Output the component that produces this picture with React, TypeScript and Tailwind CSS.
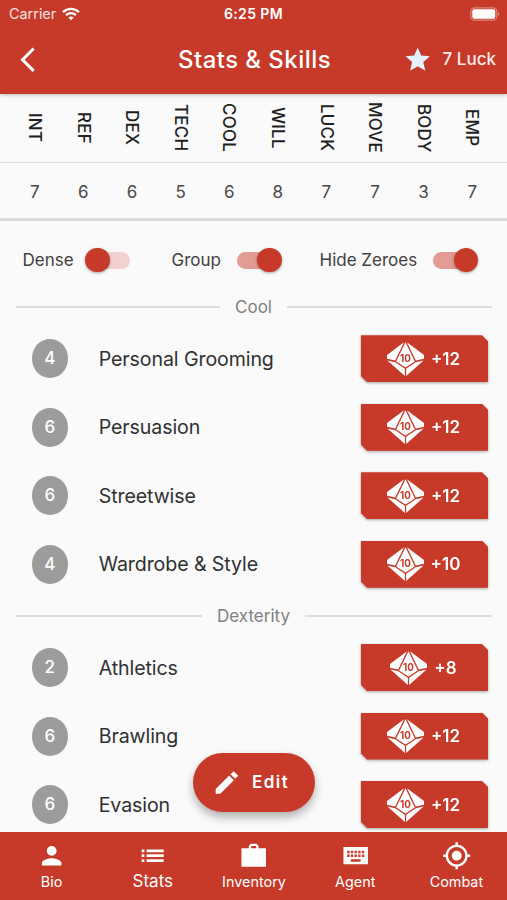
import { useState } from "react";
import type { ReactNode } from "react";

const STATS = [
  { name: "INT", value: 7 },
  { name: "REF", value: 6 },
  { name: "DEX", value: 6 },
  { name: "TECH", value: 5 },
  { name: "COOL", value: 6 },
  { name: "WILL", value: 8 },
  { name: "LUCK", value: 7 },
  { name: "MOVE", value: 7 },
  { name: "BODY", value: 3 },
  { name: "EMP", value: 7 },
];

const GROUPS = [
  {
    name: "Cool",
    skills: [
      { name: "Personal Grooming", level: 4, bonus: 12 },
      { name: "Persuasion", level: 6, bonus: 12 },
      { name: "Streetwise", level: 6, bonus: 12 },
      { name: "Wardrobe & Style", level: 4, bonus: 10 },
    ],
  },
  {
    name: "Dexterity",
    skills: [
      { name: "Athletics", level: 2, bonus: 8 },
      { name: "Brawling", level: 6, bonus: 12 },
      { name: "Evasion", level: 6, bonus: 12 },
    ],
  },
];

const TABS = [
  { label: "Bio", path: "M12 12c2.21 0 4-1.79 4-4s-1.79-4-4-4-4 1.79-4 4 1.79 4 4 4zm0 2c-2.67 0-8 1.34-8 4v2h16v-2c0-2.66-5.33-4-8-4z" },
  { label: "Stats", path: "M3 13.1h2.2v-2.2H3v2.2zm0 4h2.2v-2.2H3v2.2zm0-8h2.2V6.9H3v2.2zm4 4h14v-2.2H7v2.2zm0 4h14v-2.2H7v2.2zM7 6.9v2.2h14V6.9H7z" },
  { label: "Inventory", path: "M22 6h-6V4l-1.7-1.7H9.7L8 4v2H2v15h20V6zm-8 0h-4V4h4v2z" },
  { label: "Agent", path: "M22 5H2v14h20V5zm-11 3h2v2h-2V8zm0 3h2v2h-2v-2zM8 8h2v2H8V8zm0 3h2v2H8v-2zm-1 2H5v-2h2v2zm0-3H5V8h2v2zm9 7H8v-2h8v2zm0-4h-2v-2h2v2zm0-3h-2V8h2v2zm3 3h-2v-2h2v2zm0-3h-2V8h2v2z" },
  { label: "Combat", path: "M12 8c-2.21 0-4 1.79-4 4s1.79 4 4 4 4-1.79 4-4-1.79-4-4-4zm8.94 3c-.46-4.17-3.77-7.48-7.94-7.94V1h-2v2.06C6.83 3.52 3.52 6.83 3.06 11H1v2h2.06c.46 4.17 3.77 7.48 7.94 7.94V23h2v-2.06c4.17-.46 7.48-3.77 7.94-7.94H23v-2h-2.06zM12 19c-3.87 0-7-3.13-7-7s3.13-7 7-7 7 3.13 7 7-3.13 7-7 7z" },
];

function Icon({ path, className = "size-[29.4px]" }: { path: string; className?: string }) {
  return (
    <svg viewBox="0 0 24 24" fill="currentColor" className={className} aria-hidden="true">
      <path d={path} />
    </svg>
  );
}

function StatusBar() {
  return (
    <div className="grid h-[24.5px] grid-cols-3 items-center px-[9px] pt-[3.5px] leading-none">
      <div className="flex items-center gap-[6px] text-[14.4px] text-white/85">
        Carrier
        <svg viewBox="0 0 18 14" className="h-[14px] w-[18px] text-white" fill="none" stroke="currentColor" strokeWidth="2.3">
          <path d="M1 5.1C5.6.8 12.4.8 17 5.1" />
          <path d="M4 8.2c2.9-2.6 7.1-2.6 10 0" />
          <path d="M6.4 10.5c1.6-1.3 3.6-1.3 5.2 0L9 13.2z" fill="currentColor" stroke="none" />
        </svg>
      </div>
      <div className="text-center text-[14px] font-semibold tracking-[0.4px]">6:25 PM</div>
      <svg viewBox="0 0 30 14" className="h-[14px] w-[30px] translate-x-[2px] justify-self-end" fill="none">
        <rect x="0.8" y="0.8" width="26" height="12.4" rx="3.6" stroke="white" strokeOpacity="0.4" strokeWidth="1.2" />
        <rect x="2.3" y="2.3" width="23" height="9.4" rx="2" fill="white" />
        <path d="M28.2 5c1.4.8 1.4 3.2 0 4z" fill="white" fillOpacity="0.5" />
      </svg>
    </div>
  );
}

function TopBar() {
  return (
    <header className="z-10 h-[93.5px] shrink-0 bg-[#c73a29] text-white shadow-[0_1px_4px_rgba(0,0,0,0.25)]">
      <StatusBar />
      <div className="grid h-[69px] grid-cols-[1fr_auto_1fr] items-center pt-[2px] pr-[11px] pl-[13px]">
        <button type="button" aria-label="Back">
          <Icon path="M17.77 3.77 16 2 6 12l10 10 1.77-1.77L9.54 12z" />
        </button>
        <h1 className="text-[24px] font-medium tracking-[0.45px]">Stats &amp; Skills</h1>
        <div className="flex items-center justify-end gap-[10px] text-[17px] font-medium text-white/90">
          <Icon
            path="M12 17.27 18.18 21l-1.64-7.03L22 9.24l-7.19-.61L12 2 9.19 8.63 2 9.24l5.46 4.73L5.82 21z"
            className="size-[29.4px] text-[#e3f2fd]"
          />
          7 Luck
        </div>
      </div>
    </header>
  );
}

function StatTable() {
  return (
    <section className="shrink-0 border-b-[3px] border-[#dcdcdc] text-[#1f1f1f]">
      <div className="grid h-[69.5px] grid-cols-10 border-b border-[#dcdcdc] pr-[11px] pl-[10px]">
        {STATS.map((stat) => (
          <div key={stat.name} className="flex items-center justify-center text-[17px] font-medium tracking-[0.2px]">
            <span className="[writing-mode:vertical-rl]">{stat.name}</span>
          </div>
        ))}
      </div>
      <div className="grid h-[55px] grid-cols-10 items-center px-[10.5px] pt-[4px] text-center text-[17px] text-[#484848]">
        {STATS.map((stat) => (
          <span key={stat.name}>{stat.value}</span>
        ))}
      </div>
    </section>
  );
}

function Toggle({ label, initial, className }: { label: string; initial: boolean; className: string }) {
  const [on, setOn] = useState(initial);

  return (
    <label className={`flex items-center ${className}`}>
      <span className="pt-[2px]">{label}</span>
      <button
        type="button"
        role="switch"
        aria-checked={on}
        aria-label={label}
        onClick={() => setOn(!on)}
        className={`flex h-[17px] w-[41px] items-center rounded-full ${
          on ? "justify-end bg-[#e29a92]" : "justify-start bg-[#f2d1ce]"
        }`}
      >
        <span
          className={`size-[24.5px] shrink-0 rounded-full bg-[#c73a29] shadow-[0_1px_3px_rgba(0,0,0,0.35)] ${
            on ? "-mr-[4px]" : "-ml-[4px]"
          }`}
        />
      </button>
    </label>
  );
}

function GroupDivider({ children }: { children: ReactNode }) {
  return (
    <div className="flex h-[34.9px] items-center gap-[15px] px-[15.5px] text-[17px] text-[#808080]">
      <span className="h-[2.4px] flex-1 bg-[#dcdcdc]" />
      <span className="pt-[1px]">{children}</span>
      <span className="h-[2.4px] flex-1 bg-[#dcdcdc]" />
    </div>
  );
}

function D10() {
  return (
    <svg viewBox="0 0 37 34" className="h-[34px] w-[37px]" aria-hidden="true">
      <g fill="white">
        <path d="M17 .2 8.2 18.4 0 16.8V13z" />
        <path d="M20 .2 28.8 18.4l8.2-1.6V13z" />
        <path d="M18.5.2 27.8 19.4l-9.3 6.2-9.3-6.2z" />
        <path d="M.4 18.4 8.2 20.2 17.9 26.8V34z" />
        <path d="M36.6 18.4 28.8 20.2 19.1 26.8V34z" />
      </g>
      <text x="18.4" y="20.4" textAnchor="middle" fontSize="9.8" fontWeight="700" fill="#c73a29">
        10
      </text>
    </svg>
  );
}

function SkillRow({ name, level, bonus }: { name: string; level: number; bonus: number }) {
  return (
    <li className="flex h-[68.5px] items-center pr-[19px] pl-[31.5px]">
      <span className="flex h-[39px] w-[36.7px] items-center justify-center rounded-[50%] bg-[#9c9c9c] pt-px text-[17px] font-medium text-white">
        {level}
      </span>
      <span className="ml-[30.5px] flex-1 pt-[2px] text-[19.6px] tracking-[-0.1px] text-[#303030]">{name}</span>
      <div className="drop-shadow-[0_1.5px_1.5px_rgba(0,0,0,0.35)]">
        <button
          type="button"
          className="flex h-[47px] w-[127px] items-center justify-center gap-[7px] bg-[#c73a29] pr-[2px] text-[17px] font-semibold text-white [clip-path:polygon(0_0,calc(100%_-_6px)_0,100%_6px,100%_100%,6px_100%,0_calc(100%_-_6px))]"
        >
          <D10 />
          <span className="pt-[2px]">+{bonus}</span>
        </button>
      </div>
    </li>
  );
}

function BottomNav() {
  const [active, setActive] = useState("Stats");

  return (
    <nav className="z-10 grid h-[68.5px] shrink-0 grid-cols-5 bg-[#c73a29] pl-px text-white">
      {TABS.map((tab) => (
        <button
          key={tab.label}
          type="button"
          onClick={() => setActive(tab.label)}
          className="flex flex-col items-center pt-[9.5px]"
        >
          <Icon path={tab.path} />
          <span
            className={
              tab.label === active
                ? "pt-px text-[17px] leading-[20px]"
                : "pt-[2px] text-[14.4px] leading-[20px]"
            }
          >
            {tab.label}
          </span>
        </button>
      ))}
    </nav>
  );
}

export default function App() {
  return (
    <div className="relative flex h-[900px] w-[507px] flex-col overflow-hidden bg-[#fafafa] font-[Inter,sans-serif]">
      <TopBar />
      <StatTable />
      <main className="min-h-0 flex-1 overflow-hidden">
        <div className="mt-[9.5px] flex h-[59px] items-center pl-[22.5px] text-[17px] text-[#404040]">
          <Toggle label="Dense" initial={false} className="w-[149px] justify-start gap-[15.5px]" />
          <Toggle label="Group" initial className="w-[148px] justify-start gap-[16px]" />
          <Toggle label="Hide Zeroes" initial className="gap-[16px]" />
        </div>
        {GROUPS.map((group) => (
          <section key={group.name}>
            <GroupDivider>{group.name}</GroupDivider>
            <ul>
              {group.skills.map((skill) => (
                <SkillRow key={skill.name} {...skill} />
              ))}
            </ul>
          </section>
        ))}
      </main>
      <BottomNav />
      <button
        type="button"
        className="absolute top-[753px] left-[193px] z-20 flex h-[59px] w-[122px] items-center gap-[10.5px] rounded-full bg-[#c73a29] pl-[19px] text-[17px] font-semibold tracking-[1.5px] text-white shadow-[0_5px_10px_rgba(0,0,0,0.3)]"
      >
        <Icon path="M3 17.25V21h3.75L17.81 9.94l-3.75-3.75L3 17.25zM21.41 6.34l-3.75-3.75-2.53 2.54 3.75 3.75 2.53-2.54z" />
        <span className="pt-px">Edit</span>
      </button>
    </div>
  );
}
